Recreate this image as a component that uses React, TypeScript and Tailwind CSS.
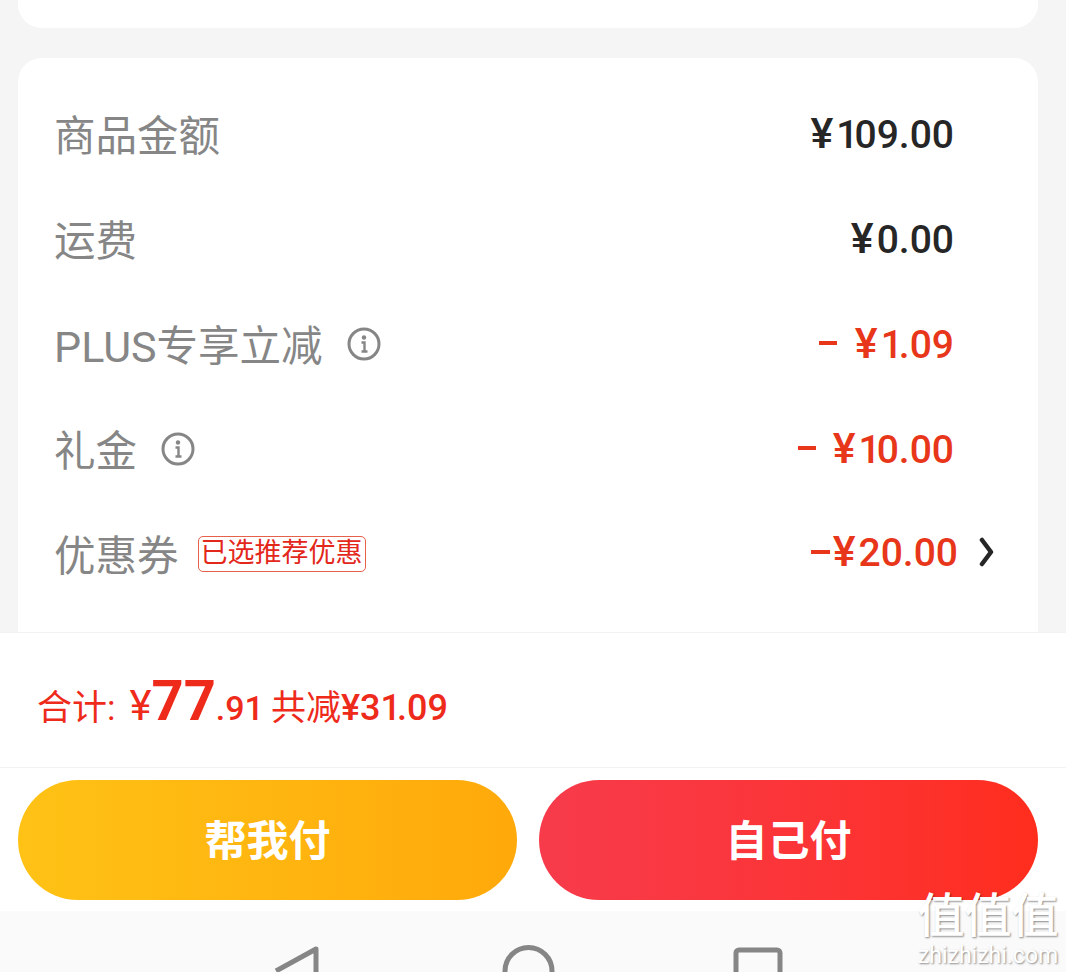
import React from "react";

const Info = () => (
  <svg width="34" height="34" viewBox="0 0 34 34" fill="none" className="shrink-0 -mt-[7px]">
    <circle cx="17" cy="17" r="15" stroke="#868686" strokeWidth="3" />
    <circle cx="17" cy="10.5" r="2.2" fill="#868686" />
    <path d="M14.5 15.5H17.5V24M14.5 24.5h6" stroke="#868686" strokeWidth="2.4" />
  </svg>
);

// the ¥ is wider and the 1 narrower in the app's font than in Roboto
const Price = ({ value, yen = "text-[43px] mr-[3px]" }: { value: string; yen?: string }) => (
  <span className="font-medium leading-none whitespace-nowrap">
    {value.split("").map((c, i) => {
      if (c === "¥") return <span key={i} className={yen}>{c}</span>;
      if (c === "1") return <span key={i} className="tracking-[-4px]">{c}</span>;
      return <span key={i}>{c}</span>;
    })}
  </span>
);

const Row = ({ children, value, sign, gap }: { children: React.ReactNode; value: string; sign?: boolean; gap?: string }) => (
  <div className="h-[105px] flex items-center justify-between pl-[36px] pr-[84px]">
    <div className="flex items-center text-[41.5px] text-[#868686] leading-none mt-[1px]">{children}</div>
    <div className={`flex items-center -mt-[7px] text-[39px] ${sign ? "text-[#e8361a]" : "text-[#262626]"}`}>
      {sign && <span className={`w-[18px] h-[4px] bg-[#e8361a] ${gap}`} />}
      <Price value={value} />
    </div>
  </div>
);

export default function App() {
  return (
    <div
      className="relative w-[1066px] h-[972px] overflow-hidden bg-[#f5f5f5] flex flex-col"
      style={{ fontFamily: '"Roboto", "Noto Sans CJK SC", sans-serif' }}
    >
      <div className="h-[632px] pl-[18px] pr-[28px] shrink-0 overflow-hidden">
        <div className="h-[28px] bg-white rounded-b-[24px]" />
        <div className="mt-[30px] h-[640px] bg-white rounded-[24px] pt-[26px]">
          <Row value="¥109.00">商品金额</Row>
          <Row value="¥0.00">运费</Row>
          <Row value="¥1.09" sign gap="mr-[18px]">
            <span className="text-[43px]">PLUS</span>专享立减
            <span className="ml-[24px] flex"><Info /></span>
          </Row>
          <Row value="¥10.00" sign gap="mr-[17px]">
            礼金
            <span className="ml-[24px] flex"><Info /></span>
          </Row>
          <div className="h-[105px] flex items-center justify-between pl-[36px] pr-[43px]">
            <div className="flex items-center text-[41.5px] text-[#868686] leading-none mt-[1px]">
              优惠券
              <span className="ml-[19px] -mt-[7px] h-[36px] px-[2px] flex items-center border border-[#e7604a] rounded-[5px] text-[27px] text-[#e3271b]">
                已选推荐优惠
              </span>
            </div>
            <div className="flex items-center -mt-[10px] text-[39px] text-[#e8361a]">
              <span className="w-[19px] h-[4px] bg-[#e8361a] mr-[3px]" />
              <Price value="¥20.00" />
              <svg width="16" height="30" viewBox="0 0 16 30" fill="none" className="ml-[21px]">
                <path d="M3 3l9 12L3 27" stroke="#262626" strokeWidth="4.5" strokeLinecap="round" strokeLinejoin="round" />
              </svg>
            </div>
          </div>
        </div>
      </div>

      <div className="h-[136px] shrink-0 bg-white border-y border-[#f2f2f2] pl-[37px] pt-[2px] flex items-center text-[#ee2a1b]">
        <div className="flex items-baseline leading-none">
          <span className="text-[35px]">合计:</span>
          <span className="text-[42px] ml-[14px]">¥</span>
          <span className="text-[56px] font-bold">77</span>
          <span className="text-[34px]">
            <Price value=".91" />
          </span>
          <span className="text-[35px] ml-[11px]">共减</span>
          <span className="text-[36px]">
            <Price value="¥31.09" yen="" />
          </span>
        </div>
      </div>

      <div className="h-[143px] shrink-0 bg-white pl-[18px] pt-[12px] flex gap-[22px]">
        <button className="w-[499px] h-[120px] rounded-[60px] bg-gradient-to-r from-[#ffc215] to-[#ffa90a] text-white text-[42px] font-bold pt-[3px]">
          帮我付
        </button>
        <button className="w-[499px] h-[120px] rounded-[60px] bg-gradient-to-r from-[#f73b4b] to-[#ff2d1c] text-white text-[42px] font-bold pt-[3px]">
          自己付
        </button>
      </div>

      <div className="flex-1 bg-[#fafafa]">
        <svg width="1066" height="61" viewBox="0 0 1066 61" fill="none" className="block">
          <path d="M316 65V38L276 60" stroke="#868686" strokeWidth="5" strokeLinejoin="round" />
          <path d="M505 65V60a23.5 23.5 0 0 1 47 0v5" stroke="#868686" strokeWidth="5" />
          <path d="M736 65V42a3 3 0 0 1 3-3h38a3 3 0 0 1 3 3v23" stroke="#868686" strokeWidth="5" />
        </svg>
      </div>

      <div className="absolute left-[914px] top-[889px] w-[148px] text-center text-white font-medium [text-shadow:1px_1px_2px_rgba(0,0,0,0.45)]">
        <div className="text-[47px] leading-[54px] whitespace-nowrap">值值值</div>
        <div className="text-[23px] leading-[25px] font-normal whitespace-nowrap">zhizhizhi.com</div>
      </div>
    </div>
  );
}
